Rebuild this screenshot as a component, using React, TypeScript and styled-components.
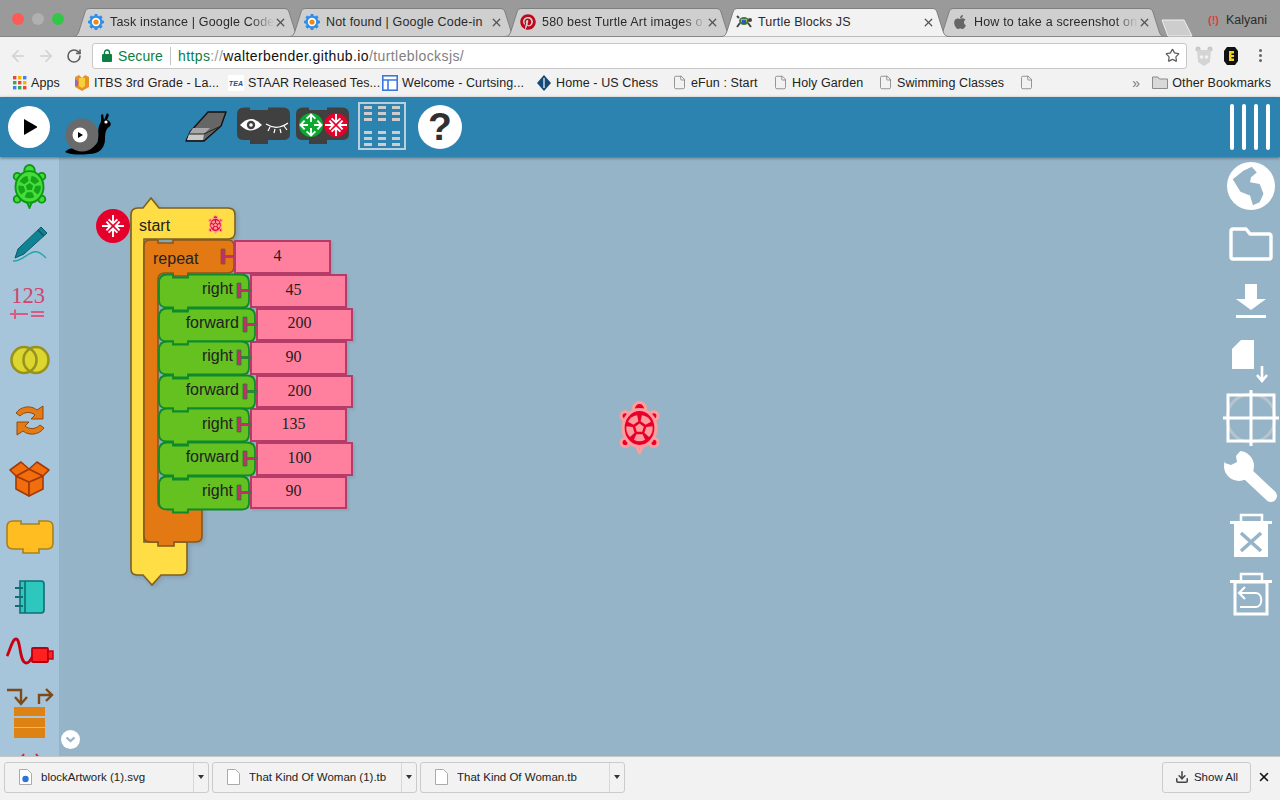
import React from "react";
import styled, { createGlobalStyle } from "styled-components";
import { ArrowLeft, ArrowRight, Download, File, RotateCw, Star, X } from "lucide-react";
import { FaApple, FaPinterest } from "react-icons/fa";

const CANVAS = "#96b4c8";

const GlobalStyle = createGlobalStyle`
  html, body {
    margin: 0;
    padding: 0;
    background: #f2f2f2;
  }

  * {
    box-sizing: border-box;
  }
`;

const Page = styled.div`
  width: 1280px;
  height: 800px;
  display: flex;
  flex-direction: column;
  overflow: hidden;
  font-family: "Liberation Sans", Arial, sans-serif;
`;

/* browser chrome */

const TabStrip = styled.div`
  height: 36px;
  flex: none;
  display: flex;
  align-items: flex-end;
  padding-left: 12px;
  background: #9a9a9a;
  position: relative;
  z-index: 1;
`;

const TrafficLights = styled.div`
  align-self: flex-start;
  display: flex;
  gap: 8px;
  width: 61px;
  margin-top: 13px;
`;

const Light = styled.span<{ $color: string }>`
  width: 12px;
  height: 12px;
  border-radius: 50%;
  background: ${(p) => p.$color};
`;

const Tab = styled.div<{ $active?: boolean }>`
  position: relative;
  flex: none;
  width: 228px;
  height: ${(p) => (p.$active ? "29px" : "28px")};
  margin-right: -12px;
  margin-bottom: ${(p) => (p.$active ? "-1px" : "0")};
  padding: 0 14px ${(p) => (p.$active ? "1px" : "0")} 15px;
  display: flex;
  align-items: center;
  z-index: ${(p) => (p.$active ? 2 : 1)};
`;

const TabShape = styled.svg`
  position: absolute;
  left: 0;
  top: 0;
`;

const TabIcon = styled.span`
  position: relative;
  width: 16px;
  height: 16px;
  margin-right: 6px;
  flex: none;
  display: flex;
  align-items: center;
  justify-content: center;
`;

const TabLabel = styled.span<{ $fade?: boolean }>`
  position: relative;
  flex: 1;
  font-size: 12.5px;
  letter-spacing: 0.18px;
  color: #2a2a2a;
  white-space: nowrap;
  ${(p) =>
    p.$fade &&
    "mask-image: linear-gradient(to right, #000 86%, transparent 100%);"}
`;

const TabClose = styled(X)`
  position: relative;
  flex: none;
  color: #555;
`;

const NewTab = styled.svg`
  flex: none;
  margin-left: 8px;
  margin-bottom: -1px;
  align-self: flex-end;
`;

const Profile = styled.div`
  align-self: flex-start;
  margin: 13px 13px 0 auto;
  display: flex;
  align-items: center;
  gap: 7px;
  font-size: 12.5px;
  color: #2b2b2b;
`;

const ProfileMark = styled.span`
  color: #d9403a;
  font-size: 11px;
  font-weight: bold;
`;

const Toolbar = styled.div`
  height: 33px;
  flex: none;
  padding: 5px 0 0 4px;
  display: flex;
  align-items: center;
  background: #f2f2f2;
  border-top: 1px solid #858585;
`;

const NavButton = styled.span<{ $color: string }>`
  width: 28px;
  display: flex;
  justify-content: center;
  color: ${(p) => p.$color};
`;

const AddressBar = styled.div`
  width: 1095px;
  height: 26px;
  margin-left: 4px;
  padding: 0 6px 0 9px;
  display: flex;
  align-items: center;
  background: #fff;
  border: 1px solid #c8c8c8;
  border-radius: 3px;
  font-size: 14px;
`;

const Secure = styled.span`
  margin-left: 6px;
  padding-right: 7px;
  margin-right: 7px;
  border-right: 1px solid #c4c4c4;
  color: #0b8043;
  line-height: 18px;
  letter-spacing: 0.1px;
`;

const UrlPart = styled.span<{ $color: string }>`
  color: ${(p) => p.$color};
  letter-spacing: 0.4px;
`;

const AddressStar = styled(Star)`
  margin-left: auto;
  color: #5f5f5f;
`;

const Extensions = styled.div`
  flex: 1;
  display: flex;
  align-items: center;
  padding-left: 8px;
  gap: 11px;
`;

const MenuDots = styled.div`
  margin-left: 10px;
  display: flex;
  flex-direction: column;
  gap: 2px;

  & span {
    width: 3px;
    height: 3px;
    border-radius: 50%;
    background: #666;
  }
`;

const BookmarksBar = styled.div`
  height: 28px;
  flex: none;
  padding: 0 9px 1px 13px;
  display: flex;
  align-items: center;
  background: #f2f2f2;
  font-size: 12.5px;
  letter-spacing: 0.1px;
  color: #222;
`;

const Bookmark = styled.div<{ $w?: number }>`
  width: ${(p) => (p.$w ? `${p.$w}px` : "auto")};
  flex: none;
  display: flex;
  align-items: center;
  gap: 4px;
  white-space: nowrap;
`;

const PageIcon = styled(File)`
  color: #777;
  flex: none;
`;

const MoreBookmarks = styled.span`
  margin-left: auto;
  margin-right: 12px;
  color: #777;
  font-size: 14px;
`;

/* Turtle Blocks app */

const AppBar = styled.div`
  height: 60px;
  flex: none;
  display: flex;
  align-items: center;
  padding-left: 8px;
  background: #2c83b0;
  box-shadow: 0 1px 3px rgba(40, 40, 40, 0.55);
  position: relative;
  z-index: 1;
`;

const ToolSlot = styled.div<{ $ml?: number; $nudge?: number }>`
  flex: none;
  display: flex;
  margin-left: ${(p) => p.$ml ?? 0}px;
  margin-top: ${(p) => p.$nudge ?? 0}px;
`;

const RoundButton = styled.div<{ $size: number }>`
  width: ${(p) => p.$size}px;
  height: ${(p) => p.$size}px;
  border-radius: 50%;
  background: #fff;
  display: flex;
  align-items: center;
  justify-content: center;
  color: #303030;
  font-size: 39px;
  font-weight: bold;
  line-height: 1;
`;

const Hamburger = styled.div`
  margin-left: auto;
  margin-right: 10px;
  display: flex;
  gap: 8px;
`;

const HamburgerBar = styled.span`
  width: 4px;
  height: 46px;
  border-radius: 2px;
  background: #fff;
`;

const Workspace = styled.div`
  flex: 1;
  min-height: 0;
  display: flex;
  background: ${CANVAS};
`;

const Palette = styled.div`
  width: 59px;
  flex: none;
  padding-top: 6px;
  display: flex;
  flex-direction: column;
  align-items: center;
  overflow: hidden;
  background: #a6c5da;
`;

const PaletteIcon = styled.div<{ $mt: number }>`
  flex: none;
  display: flex;
  margin-top: ${(p) => p.$mt}px;
`;

const Canvas = styled.div`
  flex: 1;
  position: relative;
`;

const ScrollButton = styled.div`
  position: absolute;
  left: 2px;
  top: 573px;
  width: 19px;
  height: 19px;
  border-radius: 50%;
  background: #fff;
  display: flex;
  align-items: center;
  justify-content: center;
`;

const CollapseBadge = styled.svg`
  position: absolute;
  left: 37px;
  top: 52px;
`;

const ClampArt = styled.svg`
  position: absolute;
  left: 60px;
  top: 30px;
  overflow: visible;
  filter: drop-shadow(2px 2px 2px rgba(0, 0, 0, 0.12));
`;

const BlockLabel = styled.span<{ $x: number; $y: number }>`
  position: absolute;
  left: ${(p) => p.$x}px;
  top: ${(p) => p.$y}px;
  font-size: 16px;
  line-height: 18px;
  color: #222;
`;

const StartTurtle = styled.span`
  position: absolute;
  left: 149px;
  top: 58px;
  display: flex;
`;

const RepeatValue = styled.div`
  position: absolute;
  left: 174px;
  top: 83px;
`;

const CommandStack = styled.div`
  position: absolute;
  left: 100px;
  top: 117px;
  display: flex;
  flex-direction: column;
`;

const CommandRow = styled.div`
  height: 33.6px;
  display: flex;
  align-items: stretch;
`;

const Command = styled.div<{ $w: number }>`
  position: relative;
  width: ${(p) => p.$w}px;
  padding-right: 16px;
  display: flex;
  align-items: center;
  justify-content: flex-end;
  font-size: 16px;
  color: #222;
`;

const CommandShape = styled.svg`
  position: absolute;
  left: 0;
  top: 0;
  overflow: visible;
`;

const CommandText = styled.span`
  position: relative;
  margin-top: -3px;
`;

const ValueBox = styled.div`
  width: 97px;
  height: 33.6px;
  margin-left: 1px;
  padding: 0 10px 2px 0;
  display: flex;
  align-items: center;
  justify-content: center;
  background: #ff7f9f;
  border: 2px solid #b53b68;
  box-shadow: 2px 2px 2px rgba(0, 0, 0, 0.08);
  font-family: "Liberation Serif", "Times New Roman", serif;
  font-size: 16px;
  color: #222;
`;

const CanvasTurtle = styled.div`
  position: absolute;
  left: 560px;
  top: 243px;
  display: flex;
`;

const AuxColumn = styled.div`
  width: 56px;
  flex: none;
  padding: 5px 2px 0 0;
  display: flex;
  flex-direction: column;
  align-items: center;
`;

const AuxIcon = styled.div<{ $mt: number }>`
  flex: none;
  display: flex;
  margin-top: ${(p) => p.$mt}px;
`;

/* downloads shelf */

const DownloadBar = styled.div`
  height: 44px;
  flex: none;
  display: flex;
  align-items: center;
  gap: 3px;
  padding: 0 9px 3px 4px;
  background: #f2f2f2;
  border-top: 1px solid #c6c6c6;
  font-size: 11.5px;
  color: #222;
`;

const DownloadItem = styled.div`
  width: 205px;
  height: 31px;
  flex: none;
  display: flex;
  align-items: center;
  padding-left: 14px;
  border: 1px solid #cbcbcb;
  border-radius: 3px;
`;

const DownloadName = styled.span`
  flex: 1;
  margin-left: 9px;
  white-space: nowrap;
`;

const DownloadCaret = styled.span`
  width: 15px;
  height: 29px;
  border-left: 1px solid #d8d8d8;
  display: flex;
  align-items: center;
  justify-content: center;

  &::after {
    content: "";
    border-left: 3px solid transparent;
    border-right: 3px solid transparent;
    border-top: 4px solid #333;
  }
`;

const ShowAll = styled.div`
  margin-left: auto;
  width: 89px;
  height: 31px;
  display: flex;
  align-items: center;
  justify-content: center;
  gap: 5px;
  border: 1px solid #cbcbcb;
  border-radius: 3px;
`;

const ShelfClose = styled(X)`
  margin-left: 3px;
  color: #111;
`;

/* drawings */

const GearFavicon = () => (
  <svg width="16" height="16" viewBox="0 0 16 16">
    <g fill="#2e8ee8">
      <circle cx="8" cy="8" r="6.4" />
      {[0, 45, 90, 135].map((a) => (
        <rect key={a} x="6.4" y="0" width="3.2" height="16" rx="0.8" transform={`rotate(${a} 8 8)`} />
      ))}
    </g>
    <circle cx="8" cy="8" r="4.2" fill="#fff" />
    <circle cx="8" cy="8" r="2.6" fill="#f08a12" />
  </svg>
);

const TurtleFavicon = () => (
  <svg width="16" height="14" viewBox="0 0 16 14">
    <path d="M1 12 L4 8 M12 8 L15 12 M3 3 L1 1" stroke="#444" strokeWidth="2" />
    <ellipse cx="8" cy="6" rx="5" ry="4" fill="#3f7d3a" />
    <path d="M5 4 H11 V7 H5 Z" fill="#e2a21b" />
    <path d="M6 5 H10 V9 H6 Z" fill="#2a58c0" />
    <circle cx="14" cy="5" r="2" fill="#444" />
  </svg>
);

const tabPath = "M0 28.5 C4 28.5 5 26 6 23 L12 4 C13 1.5 14 0.5 17 0.5 H211 C214 0.5 215 1.5 216 4 L222 23 C223 26 224 28.5 228 28.5";

const tabs = [
  { title: "Task instance | Google Code", icon: <GearFavicon />, fade: true },
  { title: "Not found | Google Code-in", icon: <GearFavicon /> },
  { title: "580 best Turtle Art images o", icon: <FaPinterest size={16} color="#bd081c" />, fade: true },
  { title: "Turtle Blocks JS", icon: <TurtleFavicon />, active: true },
  { title: "How to take a screenshot on", icon: <FaApple size={16} color="#666" />, fade: true },
];

const petals = [0, 72, 144, 216, 288];

const Turtle = ({
  w,
  h,
  edge,
  body,
  inner,
  ring,
}: {
  w: number;
  h: number;
  edge: string;
  body: string;
  inner: string;
  ring: number;
}) => (
  <svg width={w} height={h} viewBox="0 0 40 52">
    <g fill={body} stroke={edge} strokeWidth={ring}>
      <ellipse cx="20" cy="8.5" rx="6" ry="6.5" />
      <circle cx="6" cy="15" r="4" />
      <circle cx="34" cy="15" r="4" />
      <circle cx="6" cy="41" r="4" />
      <circle cx="34" cy="41" r="4" />
      <path d="M17 44 L20 51 L23 44 Z" />
      <ellipse cx="20" cy="27" rx="16" ry="18" />
    </g>
    <g fill={inner}>
      <path d="M20 22.6 L24.2 25.7 L22.6 30.6 H17.4 L15.8 25.7 Z" />
      {petals.map((a) => (
        <path key={a} d="M17 21 L23 21 L25.5 15.5 Q20 12.5 14.5 15.5 Z" transform={`rotate(${a + 36} 20 27)`} />
      ))}
    </g>
  </svg>
);

const RedTurtle = ({ w, h }: { w: number; h: number }) => (
  <Turtle w={w} h={h} edge="#ff9c9c" body="#e6002c" inner="#ff9c9c" ring={3} />
);

const RadialArrows = ({ outward }: { outward: boolean }) => (
  <g fill="none" stroke="#fff" strokeWidth="1.9">
    {[0, 90, 180, 270].map((a) => (
      <path
        key={a}
        transform={`rotate(${a})`}
        d={outward ? "M0 -3 V-10.5 M-4.4 -6.4 L0 -10.5 L4.4 -6.4" : "M0 -11 V-2.5 M-4.4 -6.6 L0 -2.5 L4.4 -6.6"}
      />
    ))}
  </g>
);

const Snail = () => (
  <svg width="47" height="43" viewBox="0 0 47 43">
    <path
      d="M0 40 C6 34 12 37 20 36 C27 36 33 33 33 27 C33 20 33 14 36 10 L36 3 L38 2 L39 8 L42 1 L44 3 L42 8 C46 9 47 13 44 15 C41 17 40 21 40 27 C40 36 34 42 24 42 C15 43 6 43 0 40 Z"
      fill="#000"
    />
    <circle cx="17" cy="23" r="16.5" fill="#6a6a6a" />
    <circle cx="15" cy="23" r="7.5" fill="#fff" />
    <path d="M13 20 L18 23 L13 26 Z" fill="#000" />
    <circle cx="41" cy="10" r="1.6" fill="#fff" />
  </svg>
);

const Eraser = () => (
  <svg width="42" height="31" viewBox="0 0 42 31">
    <path d="M23 1 H41 L36 15 L19 30 H1 L5 21 Z" fill="#666" stroke="#111" strokeWidth="1.4" strokeLinejoin="round" />
    <path d="M8 17 H25 L19 23 H4 Z" fill="#a8a8a8" />
    <path d="M4 23 H19 L18 29 H2 Z" fill="#c9c9c9" />
    <path d="M4 23 H19 L36 15" fill="none" stroke="#222" strokeWidth="1" />
  </svg>
);

const darkKey = "M7 0.5 H13 V3 H31 V0.5 H46 Q53 0.5 53 7 V27 Q53 33 46 33 H31 V37 H13 V33 H7 Q0 33 0 27 V7 Q0 0.5 7 0.5 Z";

const EyeButton = () => (
  <svg width="53" height="37" viewBox="0 0 53 37">
    <path d={darkKey} fill="#404040" />
    <path d="M3 18 Q14 6 25 18 Q14 29 3 18 Z" fill="#fff" />
    <circle cx="14" cy="18" r="4.2" fill="#404040" />
    <circle cx="14" cy="18" r="1.8" fill="#fff" />
    <path
      d="M29 17 Q40 24 51 16 M33 20 L31 24 M38 22 L37 26 M43 22 L44 26 M47 19 L50 23"
      fill="none"
      stroke="#fff"
      strokeWidth="1.2"
    />
  </svg>
);

const ZoomButton = () => (
  <svg width="54" height="37" viewBox="0 0 54 37">
    <path d={darkKey} fill="#404040" />
    <circle cx="15" cy="18" r="12" fill="#0aa82e" />
    <circle cx="40" cy="18" r="12" fill="#e4002b" />
    <g transform="translate(15 18)">
      <RadialArrows outward />
    </g>
    <g transform="translate(40 18)">
      <RadialArrows outward={false} />
    </g>
  </svg>
);

const GridButton = () => (
  <svg width="48" height="48" viewBox="0 0 48 48">
    <rect x="1" y="1" width="46" height="46" fill="none" stroke="#b9cfdc" strokeWidth="2" />
    {[6, 20, 34].map((x) =>
      [5, 11, 17, 30, 36, 42].map((y) => <rect key={`${x}-${y}`} x={x} y={y - 1} width="8" height="3" fill="#cdcdcd" />)
    )}
  </svg>
);

const TurtlePaletteIcon = () => (
  <Turtle w={35} h={46} edge="#0c9a12" body="#45dc3c" inner="#14a518" ring={2.2} />
);

const PenIcon = () => (
  <svg width="36" height="37" viewBox="0 0 36 37">
    <path d="M29 1 L35 7 L12 28 L3 32 L6 23 Z" fill="#0f8394" stroke="#0a5a66" strokeWidth="1" />
    <path d="M26 4 L32 10" stroke="#0a5a66" strokeWidth="1.5" />
    <path d="M1 35 C8 36 14 29 19 27 C25 24 29 27 34 32" fill="none" stroke="#27a5ad" strokeWidth="1.4" />
  </svg>
);

const NumberIcon = () => (
  <svg width="40" height="36" viewBox="0 0 40 36">
    <text x="18" y="17" textAnchor="middle" fontFamily="Liberation Serif, serif" fontSize="22.5" fill="#d0446f">
      123
    </text>
    <path d="M0 28 H18 M5 23.5 V33 M21 26 H34 M21 30 H34" fill="none" stroke="#d95a82" strokeWidth="2" />
  </svg>
);

const BooleanIcon = () => (
  <svg width="40" height="30" viewBox="0 0 40 30">
    <g fill="#dcd62e">
      <ellipse cx="14" cy="15" rx="12.5" ry="13" />
      <ellipse cx="26" cy="15" rx="12.5" ry="13" />
    </g>
    <g fill="none" stroke="#98931f" strokeWidth="2.6">
      <ellipse cx="14" cy="15" rx="12.5" ry="13" />
      <ellipse cx="26" cy="15" rx="12.5" ry="13" />
    </g>
  </svg>
);

const FlowIcon = () => (
  <svg width="30" height="31" viewBox="0 0 30 31">
    <g fill="#e57b14" stroke="#8e4b10" strokeWidth="1">
      <path d="M1 8 C6 1 16 0 22 5 L28 1 V14 H16 L20 10 C15 6 9 7 5 11 Z" />
      <path d="M29 23 C24 30 14 31 8 26 L2 30 V17 H14 L10 21 C15 25 21 24 25 20 Z" />
    </g>
  </svg>
);

const BoxIcon = () => (
  <svg width="41" height="36" viewBox="0 0 41 36">
    <g fill="#f26d0e" stroke="#a33a05" strokeWidth="1.6" strokeLinejoin="round">
      <path d="M7 15 L20 21 V35 L7 28 Z" />
      <path d="M34 15 L20 21 V35 L34 28 Z" />
      <path d="M20 8 L34 15 L20 21 L7 15 Z" />
      <path d="M12 1 L20 8 L7 15 L1 9 Z" />
      <path d="M28 1 L20 8 L34 15 L40 9 Z" />
    </g>
  </svg>
);

const ActionIcon = () => (
  <svg width="48" height="34" viewBox="0 0 48 34">
    <path
      d="M7 1 H15 V4 H33 V1 H41 Q47 1 47 7 V23 Q47 29 41 29 H33 V33 H17 V29 H7 Q1 29 1 23 V7 Q1 1 7 1 Z"
      fill="#ffbd21"
      stroke="#a9811f"
      strokeWidth="1.6"
    />
  </svg>
);

const BookIcon = () => (
  <svg width="30" height="34" viewBox="0 0 30 34">
    <path d="M5 1 H26 Q29 1 29 4 V30 Q29 33 26 33 H5 Z" fill="#2ec7bd" stroke="#0d6f74" strokeWidth="1.6" />
    <path d="M10 1 V33" stroke="#0d6f74" strokeWidth="1.6" />
    <path d="M0 8 H8 M0 17 H8 M0 26 H8" stroke="#0d6f74" strokeWidth="1.8" />
  </svg>
);

const SensorIcon = () => (
  <svg width="48" height="29" viewBox="0 0 48 29">
    <path d="M1 19 C4 14 6 2 10 2 C15 2 13 25 20 26 C25 26 25 20 27 19" fill="none" stroke="#c80010" strokeWidth="2.8" />
    <rect x="26" y="11" width="16" height="14" rx="1" fill="#ff2020" stroke="#b80010" strokeWidth="1.8" />
    <rect x="42" y="14" width="5" height="8" fill="#ff2020" stroke="#b80010" strokeWidth="1.4" />
  </svg>
);

const HeapIcon = () => (
  <svg width="48" height="51" viewBox="0 0 48 51">
    <g fill="none" stroke="#7e4a1a" strokeWidth="2.4">
      <path d="M1 2 H15 V15 M9 9 L15 16 L21 9" />
      <path d="M33 16 V7 H46 M40 1 L46 7 L40 13" />
    </g>
    <g fill="#de8214">
      <rect x="8" y="19" width="31" height="9" />
      <rect x="8" y="30" width="31" height="9" />
      <rect x="8" y="40" width="31" height="10" />
    </g>
  </svg>
);

const MediaPeek = () => (
  <svg width="24" height="6" viewBox="0 0 24 6">
    <path d="M3 5 L6 1 M18 1 L21 5" fill="none" stroke="#d8232a" strokeWidth="2" />
  </svg>
);

const GlobeIcon = () => (
  <svg width="48" height="48" viewBox="0 0 50 50">
    <circle cx="25" cy="25" r="25" fill="#fff" />
    <path d="M6 18 L17 9 L26 5 L31 11 L25 16 L24 21 L34 23 L38 33 L34 42 L27 45 L24 35 L14 31 Z" fill={CANVAS} />
    <path d="M25 6 A19 19 0 0 1 44 25 L37 23 L36 17 L30 14 L33 8 Z" fill="#fff" />
  </svg>
);

const FolderIcon = () => (
  <svg width="44" height="34" viewBox="0 0 44 34">
    <path
      d="M2 4 Q2 2 4 2 H17 L21 7 H40 Q42 7 42 9 V30 Q42 32 40 32 H4 Q2 32 2 30 Z"
      fill="none"
      stroke="#fff"
      strokeWidth="3.4"
      strokeLinejoin="round"
    />
  </svg>
);

const DownloadFillIcon = () => (
  <svg width="30" height="34" viewBox="0 0 30 34">
    <path d="M9 0 H21 V15 H30 L15 26 L0 15 H9 Z" fill="#fff" />
    <rect y="31" width="30" height="3" fill="#fff" />
  </svg>
);

const SaveWithArrowIcon = () => (
  <svg width="40" height="43" viewBox="0 0 40 43">
    <path d="M10 0 H23 V29 H1 V9 Z" fill="#fff" />
    <path d="M31 26 V40 M26 35 L31 41 L36 35" fill="none" stroke="#fff" strokeWidth="2.6" />
  </svg>
);

const CenterIcon = () => (
  <svg width="56" height="56" viewBox="0 0 56 56">
    <circle cx="28" cy="28" r="24" fill="none" stroke="#b9c3cb" strokeWidth="3" />
    <rect x="5" y="5" width="46" height="46" fill="none" stroke="#fff" strokeWidth="3" />
    <path d="M28 0 V56 M0 28 H56" stroke="#fff" strokeWidth="3" />
  </svg>
);

const WrenchIcon = () => (
  <svg width="54" height="53" viewBox="0 0 54 53">
    <circle cx="15" cy="16" r="15" fill="#fff" />
    <path d="M15 16 L47 46" stroke="#fff" strokeWidth="12" strokeLinecap="round" />
    <path d="M18 -1 L12 6 L13 12 L7 15 L1 13 L-2 -2 Z" fill={CANVAS} />
  </svg>
);

const TrashIcon = () => (
  <svg width="42" height="44" viewBox="0 0 42 44">
    <path d="M11 8 V2 H32 V8" fill="none" stroke="#fff" strokeWidth="2.5" />
    <rect y="8" width="42" height="3" fill="#fff" />
    <rect x="4" y="11" width="34" height="33" fill="#fff" />
    <path d="M11 20 L31 38 M31 20 L11 38" stroke={CANVAS} strokeWidth="3.6" />
  </svg>
);

const RestoreIcon = () => (
  <svg width="42" height="44" viewBox="0 0 42 44">
    <path d="M11 8 V2 H32 V8" fill="none" stroke="#fff" strokeWidth="2.5" />
    <rect y="8" width="42" height="3" fill="#fff" />
    <rect x="5" y="10" width="32" height="32" fill="none" stroke="#fff" strokeWidth="3" />
    <path d="M15 15 L9 21 L15 27 M9 21 H26 C33 21 33 35 26 35 H10" fill="none" stroke="#fff" strokeWidth="2" />
  </svg>
);

const AppsIcon = () => {
  const colors = ["#e8453c", "#f4b400", "#3b82f0", "#34a853", "#e8453c", "#f4b400", "#3b82f0", "#34a853", "#e8453c"];
  return (
    <svg width="14" height="14" viewBox="0 0 14 14">
      {colors.map((c, i) => (
        <rect key={i} x={(i % 3) * 5} y={Math.floor(i / 3) * 5} width="3.4" height="3.4" fill={c} />
      ))}
    </svg>
  );
};

const ItbsIcon = () => (
  <svg width="16" height="16" viewBox="0 0 16 16">
    <path d="M1 2 L5 0 L8 3 L11 0 L15 2 V12 L8 16 L1 12 Z" fill="#e8912a" />
    <path d="M5 3 H11 V11 L8 13 L5 11 Z" fill="#f6d13a" />
    <path d="M1 4 L4 6 V11 L1 11 Z" fill="#8d6cc4" />
  </svg>
);

const TeaIcon = () => (
  <svg width="16" height="16" viewBox="0 0 16 16">
    <rect width="16" height="16" fill="#fff" />
    <text x="8" y="11" textAnchor="middle" fontFamily="Liberation Sans, sans-serif" fontSize="7" fontWeight="bold" fontStyle="italic" fill="#1d4f91">
      TEA
    </text>
  </svg>
);

const WelcomeIcon = () => (
  <svg width="16" height="16" viewBox="0 0 16 16">
    <rect x="0.8" y="0.8" width="14.4" height="14.4" fill="#fff" stroke="#3a78e0" strokeWidth="1.6" />
    <path d="M1 5 H15 M6 5 V15" stroke="#3a78e0" strokeWidth="1.6" />
  </svg>
);

const HomeIcon = () => (
  <svg width="16" height="16" viewBox="0 0 16 16">
    <path d="M8 0 L15 8 L8 16 L1 8 Z" fill="#134a78" />
    <path d="M8 3 V13" stroke="#fff" strokeWidth="1.2" />
  </svg>
);

const FolderSmall = () => (
  <svg width="16" height="13" viewBox="0 0 16 13">
    <path d="M0.5 1 H6 L7.5 3 H15.5 V12.5 H0.5 Z" fill="#d8d8d8" stroke="#8b8b8b" />
  </svg>
);

const BearIcon = () => (
  <svg width="18" height="20" viewBox="0 0 18 20">
    <circle cx="3" cy="3" r="2.6" fill="#c9c9c9" />
    <circle cx="15" cy="3" r="2.6" fill="#c9c9c9" />
    <path d="M2 4 H16 L15 16 L9 20 L3 16 Z" fill="#d4d4d4" />
    <circle cx="6.5" cy="11" r="1.8" fill="#f2f2f2" />
    <circle cx="11.5" cy="11" r="1.8" fill="#f2f2f2" />
  </svg>
);

const EvernoteLikeIcon = () => (
  <svg width="14" height="18" viewBox="0 0 14 18">
    <path d="M3 0 H11 L14 4 V14 L11 18 H3 L0 14 V4 Z" fill="#111" />
    <path d="M5 4 H10 V6.5 H7.5 V8 H10 V10 H7.5 V11.5 H10 V14 H5 Z" fill="#f2d21b" />
  </svg>
);

const SvgFileIcon = () => (
  <svg width="13" height="16" viewBox="0 0 13 16">
    <path d="M0.5 0.5 H8.5 L12.5 4.5 V15.5 H0.5 Z" fill="#fff" stroke="#aaa" />
    <circle cx="6.5" cy="10" r="3.2" fill="#2d74d8" />
  </svg>
);

const BlankFileIcon = () => (
  <svg width="13" height="16" viewBox="0 0 13 16">
    <path d="M0.5 0.5 H8.5 L12.5 4.5 V15.5 H0.5 Z" fill="#fff" stroke="#aaa" />
  </svg>
);

/* page coordinates of the clamps, the svg is shifted to them by its viewBox */
const startPath =
  "M131 214 Q131 207 138 207 H143 L151 197 L159 207 H228 Q235 207 235 214 V231 Q235 238 228 238 H144 V541 H187 V568 Q187 574 181 574 H161 L152 584 L143 574 H137 Q131 574 131 568 Z";
const repeatPath =
  "M144 245 Q144 239 150 239 H158 V242 H173 V239 H228 Q234 239 234 245 V266 Q234 272 228 272 H188 V275 H173 V272 H165 Q158 272 158 279 V501 Q158 507 164 507 H202 V535 Q202 541 196 541 H174 V545 H158 V541 H150 Q144 541 144 535 Z";

const socketPath = (x: number, y: number) => `M${x} ${y} h4 v6.5 h9.5 v2 h-9.5 v6.5 h-4 Z`;

const commands = [
  { label: "right", value: 45, wide: false },
  { label: "forward", value: 200, wide: true },
  { label: "right", value: 90, wide: false },
  { label: "forward", value: 200, wide: true },
  { label: "right", value: 135, wide: false },
  { label: "forward", value: 100, wide: true },
  { label: "right", value: 90, wide: false },
];

const commandPath = (w: number) =>
  `M0 9 Q0 0.5 8 0.5 H14 V3.5 H29 V0.5 H${w - 8} Q${w} 0.5 ${w} 8 V27 Q${w} 33.5 ${w - 7} 33.5 H29 V36.5 H14 V33.5 H8 Q0 33.5 0 26 Z`;

const CommandBlock = ({ label, value, wide }: { label: string; value: number; wide: boolean }) => {
  const w = wide ? 96 : 90;
  return (
    <CommandRow>
      <Command $w={w}>
        <CommandShape width={w} height="34" viewBox={`0 0 ${w} 34`}>
          <path d={commandPath(w)} fill="#64c11f" stroke="#0e8a2c" strokeWidth="1.8" />
          <path d={socketPath(w - 12, 9)} fill="#c22e6e" stroke="#0e8a2c" strokeWidth="0.8" />
        </CommandShape>
        <CommandText>{label}</CommandText>
      </Command>
      <ValueBox>{value}</ValueBox>
    </CommandRow>
  );
};

export default function App() {
  return (
    <Page>
      <GlobalStyle />

      <TabStrip>
        <TrafficLights>
          <Light $color="#fc5b57" />
          <Light $color="#b0b0b0" />
          <Light $color="#33c748" />
        </TrafficLights>
        {tabs.map((tab) => (
          <Tab key={tab.title} $active={tab.active}>
            <TabShape width="228" height={tab.active ? 29 : 28} viewBox={`0 0 228 ${tab.active ? 29 : 28}`}>
              <path d={tabPath} fill={tab.active ? "#f2f2f2" : "#cfcfcf"} stroke="#7f7f7f" />
            </TabShape>
            <TabIcon>{tab.icon}</TabIcon>
            <TabLabel $fade={tab.fade}>{tab.title}</TabLabel>
            <TabClose size={13} strokeWidth={2.4} />
          </Tab>
        ))}
        <NewTab width="32" height="18" viewBox="0 0 32 18">
          <path d="M1 1 H23 L31 17 H7 Z" fill="#cdcdcd" stroke="#efefef" />
        </NewTab>
        <Profile>
          <ProfileMark>(!)</ProfileMark>
          Kalyani
        </Profile>
      </TabStrip>

      <Toolbar>
        <NavButton $color="#d0d0d0">
          <ArrowLeft size={18} />
        </NavButton>
        <NavButton $color="#d0d0d0">
          <ArrowRight size={18} />
        </NavButton>
        <NavButton $color="#5f5f5f">
          <RotateCw size={16} strokeWidth={2.4} />
        </NavButton>
        <AddressBar>
          <svg width="10" height="13" viewBox="0 0 10 13">
            <path d="M2.5 6 V3.5 a2.5 2.5 0 0 1 5 0 V6" fill="none" stroke="#0b8043" strokeWidth="1.4" />
            <rect y="5" width="10" height="8" rx="1" fill="#0b8043" />
          </svg>
          <Secure>Secure</Secure>
          <UrlPart $color="#0b8043">https</UrlPart>
          <UrlPart $color="#9a9a9a">://</UrlPart>
          <UrlPart $color="#111">walterbender.github.io</UrlPart>
          <UrlPart $color="#808080">/turtleblocksjs/</UrlPart>
          <AddressStar size={15} />
        </AddressBar>
        <Extensions>
          <BearIcon />
          <EvernoteLikeIcon />
          <MenuDots>
            <span />
            <span />
            <span />
          </MenuDots>
        </Extensions>
      </Toolbar>

      <BookmarksBar>
        <Bookmark $w={61}>
          <AppsIcon /> Apps
        </Bookmark>
        <Bookmark $w={154}>
          <ItbsIcon /> ITBS 3rd Grade - La...
        </Bookmark>
        <Bookmark $w={154}>
          <TeaIcon /> STAAR Released Tes...
        </Bookmark>
        <Bookmark $w={154}>
          <WelcomeIcon /> Welcome - Curtsing...
        </Bookmark>
        <Bookmark $w={136}>
          <HomeIcon /> Home - US Chess
        </Bookmark>
        <Bookmark $w={101}>
          <PageIcon size={15} strokeWidth={1.2} /> eFun : Start
        </Bookmark>
        <Bookmark $w={105}>
          <PageIcon size={15} strokeWidth={1.2} /> Holy Garden
        </Bookmark>
        <Bookmark $w={141}>
          <PageIcon size={15} strokeWidth={1.2} /> Swimming Classes
        </Bookmark>
        <Bookmark>
          <PageIcon size={15} strokeWidth={1.2} />
        </Bookmark>
        <MoreBookmarks>»</MoreBookmarks>
        <Bookmark>
          <FolderSmall /> Other Bookmarks
        </Bookmark>
      </BookmarksBar>

      <AppBar>
        <ToolSlot>
          <RoundButton $size={42}>
            <svg width="16" height="18" viewBox="-2 0 16 18">
              <path d="M1 1 L15 9 L1 17 Z" fill="#000" />
            </svg>
          </RoundButton>
        </ToolSlot>
        <ToolSlot $ml={15} $nudge={13}>
          <Snail />
        </ToolSlot>
        <ToolSlot $ml={73} $nudge={-1}>
          <Eraser />
        </ToolSlot>
        <ToolSlot $ml={10} $nudge={-3}>
          <EyeButton />
        </ToolSlot>
        <ToolSlot $ml={6} $nudge={-3}>
          <ZoomButton />
        </ToolSlot>
        <ToolSlot $ml={8} $nudge={-2}>
          <GridButton />
        </ToolSlot>
        <ToolSlot $ml={12} $nudge={-1}>
          <RoundButton $size={44}>?</RoundButton>
        </ToolSlot>
        <Hamburger>
          <HamburgerBar />
          <HamburgerBar />
          <HamburgerBar />
          <HamburgerBar />
        </Hamburger>
      </AppBar>

      <Workspace>
        <Palette>
          <PaletteIcon $mt={0}>
            <TurtlePaletteIcon />
          </PaletteIcon>
          <PaletteIcon $mt={17}>
            <PenIcon />
          </PaletteIcon>
          <PaletteIcon $mt={23}>
            <NumberIcon />
          </PaletteIcon>
          <PaletteIcon $mt={23}>
            <BooleanIcon />
          </PaletteIcon>
          <PaletteIcon $mt={30}>
            <FlowIcon />
          </PaletteIcon>
          <PaletteIcon $mt={25}>
            <BoxIcon />
          </PaletteIcon>
          <PaletteIcon $mt={23}>
            <ActionIcon />
          </PaletteIcon>
          <PaletteIcon $mt={26}>
            <BookIcon />
          </PaletteIcon>
          <PaletteIcon $mt={23}>
            <SensorIcon />
          </PaletteIcon>
          <PaletteIcon $mt={22}>
            <HeapIcon />
          </PaletteIcon>
          <PaletteIcon $mt={14}>
            <MediaPeek />
          </PaletteIcon>
        </Palette>

        <Canvas>
          <ScrollButton>
            <svg width="11" height="7" viewBox="0 0 11 7">
              <path d="M1.5 1.5 L5.5 5 L9.5 1.5" fill="none" stroke="#96b4c8" strokeWidth="2.2" />
            </svg>
          </ScrollButton>

          <CollapseBadge width="34" height="34" viewBox="-17 -17 34 34">
            <circle r="17" fill="#e4002b" />
            <RadialArrows outward={false} />
          </CollapseBadge>
          <ClampArt width="280" height="400" viewBox="119 186 280 400">
            <path d={startPath} fill="#ffdd44" stroke="#7d5f20" strokeWidth="1.6" />
            <path d={repeatPath} fill="#e37913" stroke="#85581e" strokeWidth="1.6" />
            <path d={socketPath(221, 248)} fill="#c22e6e" stroke="#85581e" strokeWidth="0.8" />
          </ClampArt>
          <BlockLabel $x={80} $y={60}>
            start
          </BlockLabel>
          <StartTurtle>
            <RedTurtle w={15} h={19} />
          </StartTurtle>
          <BlockLabel $x={94} $y={93}>
            repeat
          </BlockLabel>
          <RepeatValue>
            <ValueBox>4</ValueBox>
          </RepeatValue>
          <CommandStack>
            {commands.map((c, i) => (
              <CommandBlock key={i} {...c} />
            ))}
          </CommandStack>

          <CanvasTurtle>
            <RedTurtle w={41} h={54} />
          </CanvasTurtle>
        </Canvas>

        <AuxColumn>
          <AuxIcon $mt={0}>
            <GlobeIcon />
          </AuxIcon>
          <AuxIcon $mt={17}>
            <FolderIcon />
          </AuxIcon>
          <AuxIcon $mt={23}>
            <DownloadFillIcon />
          </AuxIcon>
          <AuxIcon $mt={22}>
            <SaveWithArrowIcon />
          </AuxIcon>
          <AuxIcon $mt={7}>
            <CenterIcon />
          </AuxIcon>
          <AuxIcon $mt={4}>
            <WrenchIcon />
          </AuxIcon>
          <AuxIcon $mt={10}>
            <TrashIcon />
          </AuxIcon>
          <AuxIcon $mt={15}>
            <RestoreIcon />
          </AuxIcon>
        </AuxColumn>
      </Workspace>

      <DownloadBar>
        <DownloadItem>
          <SvgFileIcon />
          <DownloadName>blockArtwork (1).svg</DownloadName>
          <DownloadCaret />
        </DownloadItem>
        <DownloadItem>
          <BlankFileIcon />
          <DownloadName>That Kind Of Woman (1).tb</DownloadName>
          <DownloadCaret />
        </DownloadItem>
        <DownloadItem>
          <BlankFileIcon />
          <DownloadName>That Kind Of Woman.tb</DownloadName>
          <DownloadCaret />
        </DownloadItem>
        <ShowAll>
          <Download size={14} strokeWidth={2.6} color="#444" />
          Show All
        </ShowAll>
        <ShelfClose size={14} strokeWidth={2.6} />
      </DownloadBar>
    </Page>
  );
}
